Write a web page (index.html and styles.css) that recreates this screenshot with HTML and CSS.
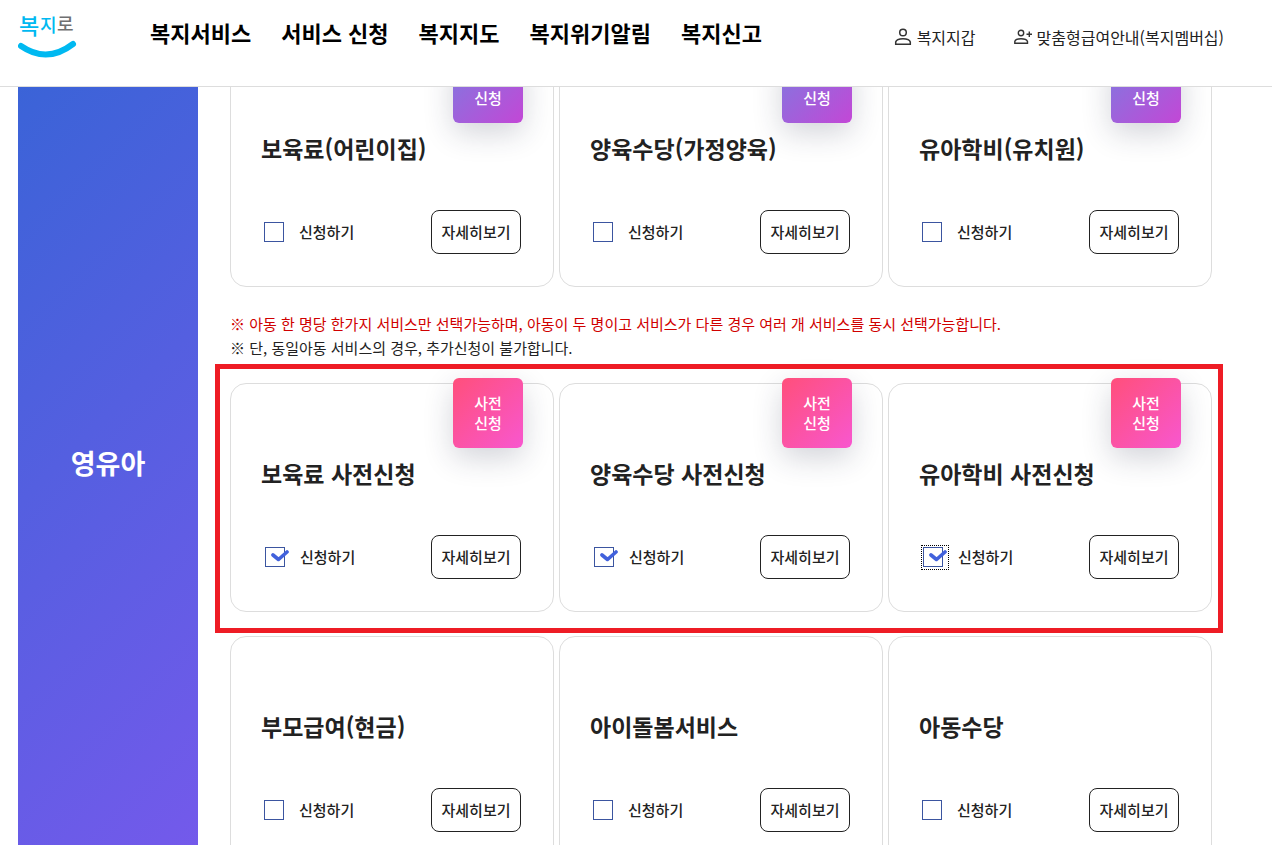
FILE: index.html
```html
<!DOCTYPE html>
<html lang="ko">

<head>
    <meta charset="UTF-8">
    <meta name="viewport" content="width=device-width, initial-scale=1.0">
    <title>복지로</title>
    <link rel="stylesheet" href="styles.css">
</head>

<body>
    <svg class="sprite" aria-hidden="true">
        <symbol id="tick" viewBox="0 0 18 12">
            <path d="M2 5 L7.500 9.500 L16 2" fill="none" stroke="#4161dc" stroke-width="3.600" stroke-linecap="round" stroke-linejoin="round"/>
        </symbol>
    </svg>

    <header class="header">
        <a href="#" class="logo" aria-label="복지로">
            <svg width="60" height="52" viewBox="0 0 60 52">
                <text x="1" y="28" font-size="22" fill="#00b9f1">복</text>
                <text x="22" y="26" font-size="18" fill="#00b9f1">지</text>
                <text x="39" y="25" font-size="18" fill="#6f7072">로</text>
                <path d="M3 40 Q29 58 55 38" fill="none" stroke="#00b9f1" stroke-width="6" stroke-linecap="round"/>
            </svg>
        </a>
        <nav class="nav">
            <a href="#">복지서비스</a>
            <a href="#">서비스 신청</a>
            <a href="#">복지지도</a>
            <a href="#">복지위기알림</a>
            <a href="#">복지신고</a>
        </nav>
        <div class="user-menu">
            <a href="#">
                <svg width="18" height="18" viewBox="0 0 18 18" fill="none" stroke="#333" stroke-width="1.500">
                    <circle cx="9" cy="4.500" r="3.300"/>
                    <path d="M1.700 16.200 V14 Q2.500 10.700 9 10.700 T16.300 14 V16.200 Z"/>
                </svg>
                복지지갑
            </a>
            <a href="#">
                <svg width="18" height="18" viewBox="0 0 18 18" fill="none" stroke="#333" stroke-width="1.400">
                    <circle cx="7" cy="5" r="2.700"/>
                    <path d="M.8 15.200 V13.500 Q1.500 10.700 7 10.700 T13.500 13.500 V15.200 Z M15.300 3.500 V9 M12.500 6.200 H18"/>
                </svg>
                맞춤형급여안내(복지멤버십)
            </a>
        </div>
    </header>

    <main class="main">
        <h2 class="category">영유아</h2>

        <div class="services">
            <div class="row">
                <section class="card">
                    <span class="badge now">온라인<br>신청</span>
                    <h3>보육료(어린이집)</h3>
                    <div class="actions">
                        <label class="apply"><span class="box"><input type="checkbox"></span>신청하기</label>
                        <button class="detail">자세히보기</button>
                    </div>
                </section>
                <section class="card">
                    <span class="badge now">온라인<br>신청</span>
                    <h3>양육수당(가정양육)</h3>
                    <div class="actions">
                        <label class="apply"><span class="box"><input type="checkbox"></span>신청하기</label>
                        <button class="detail">자세히보기</button>
                    </div>
                </section>
                <section class="card">
                    <span class="badge now">온라인<br>신청</span>
                    <h3>유아학비(유치원)</h3>
                    <div class="actions">
                        <label class="apply"><span class="box"><input type="checkbox"></span>신청하기</label>
                        <button class="detail">자세히보기</button>
                    </div>
                </section>
            </div>

            <div class="notes">
                <p class="warning">※ 아동 한 명당 한가지 서비스만 선택가능하며, 아동이 두 명이고 서비스가 다른 경우 여러 개 서비스를 동시 선택가능합니다.</p>
                <p>※ 단, 동일아동 서비스의 경우, 추가신청이 불가합니다.</p>
            </div>

            <div class="row highlight">
                <section class="card">
                    <span class="badge">사전<br>신청</span>
                    <h3>보육료 사전신청</h3>
                    <div class="actions">
                        <label class="apply checked"><span class="box"><input type="checkbox" checked><svg><use href="#tick"/></svg></span>신청하기</label>
                        <button class="detail">자세히보기</button>
                    </div>
                </section>
                <section class="card">
                    <span class="badge">사전<br>신청</span>
                    <h3>양육수당 사전신청</h3>
                    <div class="actions">
                        <label class="apply checked"><span class="box"><input type="checkbox" checked><svg><use href="#tick"/></svg></span>신청하기</label>
                        <button class="detail">자세히보기</button>
                    </div>
                </section>
                <section class="card">
                    <span class="badge">사전<br>신청</span>
                    <h3>유아학비 사전신청</h3>
                    <div class="actions">
                        <label class="apply checked"><span class="box focused"><input type="checkbox" checked><svg><use href="#tick"/></svg></span>신청하기</label>
                        <button class="detail">자세히보기</button>
                    </div>
                </section>
            </div>

            <div class="row">
                <section class="card">
                    <h3>부모급여(현금)</h3>
                    <div class="actions">
                        <label class="apply"><span class="box"><input type="checkbox"></span>신청하기</label>
                        <button class="detail">자세히보기</button>
                    </div>
                </section>
                <section class="card">
                    <h3>아이돌봄서비스</h3>
                    <div class="actions">
                        <label class="apply"><span class="box"><input type="checkbox"></span>신청하기</label>
                        <button class="detail">자세히보기</button>
                    </div>
                </section>
                <section class="card">
                    <h3>아동수당</h3>
                    <div class="actions">
                        <label class="apply"><span class="box"><input type="checkbox"></span>신청하기</label>
                        <button class="detail">자세히보기</button>
                    </div>
                </section>
            </div>
        </div>
    </main>
</body>

</html>
```

FILE: styles.css
```css
* {
    box-sizing: border-box;
}

body {
    margin: 0;
    height: 100vh;
    overflow: hidden;
    background: #fff;
    color: #222;
    font-family: "Noto Sans CJK KR", sans-serif;
    font-size: 15px;
    line-height: 24px;
}

a {
    color: inherit;
    text-decoration: none;
}

h2, h3, p {
    margin: 0;
}

.sprite {
    display: none;
}

/* header */
.header {
    position: fixed;
    top: 0;
    left: 0;
    right: 0;
    z-index: 10;
    display: flex;
    align-items: flex-start;
    height: 87px;
    padding: 6px 48px 0 18px;
    background: #fff;
    border-bottom: 1px solid #ddd;
}

.logo {
    width: 60px;
    margin-right: 72px;
}

.logo svg {
    display: block;
    font-weight: 500;
    line-height: 20px;
}

.nav {
    display: flex;
    gap: 30px;
    padding-top: 10px;
    color: #000;
    font-size: 22px;
    line-height: 32px;
    font-weight: 700;
    white-space: nowrap;
}

.user-menu {
    display: flex;
    gap: 38px;
    margin-left: auto;
    padding-top: 19px;
    font-size: 16px;
    white-space: nowrap;
}

.user-menu a {
    display: flex;
    align-items: center;
    gap: 5px;
}

/* service list */
.main {
    display: flex;
    gap: 32px;
    padding: 25px 60px 0 18px;
}

.category {
    display: flex;
    flex: none;
    align-items: center;
    justify-content: center;
    width: 180px;
    background: linear-gradient(135deg, #3764d6, #7759ec);
    color: #fff;
    font-size: 27px;
    font-weight: 700;
}

.services {
    flex: 1;
    padding: 33px 0 36px;
}

.row {
    display: grid;
    grid-template-columns: repeat(3, 1fr);
    gap: 5px;
    margin-bottom: 24px;
}

.row:last-child {
    margin-bottom: 0;
}

.highlight {
    position: relative;
}

.highlight::after {
    content: "";
    position: absolute;
    inset: -19px -11px -21px -15px;
    border: 5px solid #ee1c25;
    pointer-events: none;
}

.card {
    position: relative;
    padding: 73px 32px 32px 30px;
    border: 1px solid #ddd;
    border-radius: 16px;
}

.card h3 {
    margin-bottom: 46px;
    font-size: 23px;
    line-height: 32px;
    font-weight: 700;
}

.badge {
    position: absolute;
    top: -6px;
    right: 30px;
    width: 70px;
    height: 70px;
    padding-top: 15px;
    border-radius: 6px;
    background: linear-gradient(135deg, #ff4f7b, #f857cf);
    box-shadow: 0 10px 30px rgba(35, 40, 70, 0.2);
    color: #fff;
    line-height: 20px;
    font-weight: 500;
    text-align: center;
}

.badge.now {
    background: linear-gradient(135deg, #7c7ce0, #c347d6);
}

.actions {
    display: flex;
    align-items: center;
    justify-content: space-between;
}

.apply {
    display: flex;
    align-items: center;
    gap: 11px;
    padding-left: 3px;
    font-weight: 500;
}

.apply.checked {
    padding-left: 4px;
}

.box {
    position: relative;
    width: 24px;
    height: 21px;
}

.box input {
    display: block;
    appearance: none;
    width: 20px;
    height: 20px;
    margin: 0;
    border: 1px solid #3b55a0;
    background: #fff;
}

.box svg {
    position: absolute;
    top: 3px;
    left: 6px;
    width: 18px;
    height: 12px;
}

.focused {
    outline: 1px dotted #000;
    outline-offset: 1px;
}

.detail {
    width: 90px;
    height: 44px;
    padding: 0;
    border: 1px solid #222;
    border-radius: 8px;
    background: #fff;
    color: #222;
    font: inherit;
    font-weight: 500;
}

.notes {
    margin: 25px 0 23px;
}

.notes .warning {
    color: #d00000;
}
```
